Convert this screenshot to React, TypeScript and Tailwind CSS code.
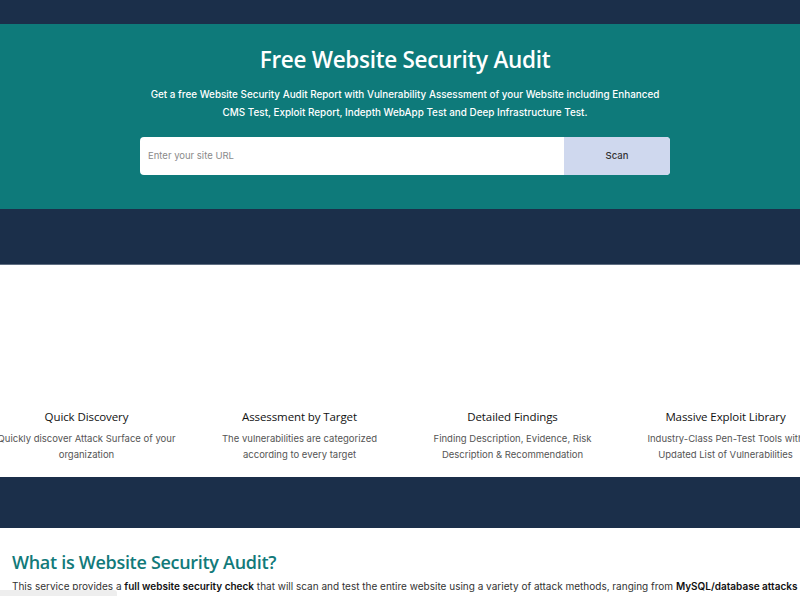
const features = [
  {
    title: 'Quick Discovery',
    text: ['Quickly discover Attack Surface of your', 'organization'],
  },
  {
    title: 'Assessment by Target',
    text: ['The vulnerabilities are categorized', 'according to every target'],
  },
  {
    title: 'Detailed Findings',
    text: ['Finding Description, Evidence, Risk', 'Description & Recommendation'],
  },
  {
    title: 'Massive Exploit Library',
    text: ['Industry-Class Pen-Test Tools with', 'Updated List of Vulnerabilities'],
  },
]

export default function App() {
  return (
    <div className="relative h-[596px] w-[800px] overflow-hidden bg-white font-['Inter',sans-serif]">
      {/* top nav strip */}
      <div className="h-[24px] bg-[#1b2f4a]" />

      {/* hero */}
      <section className="flex h-[185px] flex-col items-center bg-[#0e7a7a] pt-[20px] pl-[10px] text-white">
        <h1 className="font-['Open_Sans',sans-serif] text-[22.5px] leading-[32px] font-semibold tracking-[-0.3px]">
          Free Website Security Audit
        </h1>
        <p className="mt-[9px] text-center text-[9.9px] leading-[18px] font-medium">
          Get a free Website Security Audit Report with Vulnerability Assessment of your Website including Enhanced
          <br />
          CMS Test, Exploit Report, Indepth WebApp Test and Deep Infrastructure Test.
        </p>
        <div className="mt-[16px] flex h-[38px] w-[530px] overflow-hidden rounded-[4px] bg-white">
          <input
            className="flex-1 px-[8px] text-[9.5px] text-gray-700 outline-none placeholder:text-[#8a8a8a]"
            placeholder="Enter your site URL"
          />
          <button className="w-[106px] bg-[#cfd8ee] text-[9.5px] font-medium text-[#333]">Scan</button>
        </div>
      </section>

      <div className="h-[56px] border-b border-[#5f6e82] bg-[#1b2f4a]" />

      {/* features */}
      <section className="h-[212px] overflow-hidden pt-[143px]">
        <div className="ml-[-20px] flex w-[852px]">
          {features.map((f) => (
            <div key={f.title} className="flex w-[213px] flex-col items-center text-center">
              <h3 className="font-['Open_Sans',sans-serif] text-[11.5px] leading-[18px] font-medium tracking-[-0.1px] text-[#111]">
                {f.title}
              </h3>
              <p className="mt-[5px] text-[9.5px] leading-[16px] whitespace-nowrap text-[#555]">
                {f.text[0]}
                <br />
                {f.text[1]}
              </p>
            </div>
          ))}
        </div>
      </section>

      <div className="h-[51px] bg-[#1b2f4a]" />

      {/* what is */}
      <section className="px-[12px] pt-[22px]">
        <h2 className="font-['Open_Sans',sans-serif] text-[18px] leading-[24px] font-semibold tracking-[-0.3px] text-[#127a7a]">
          What is Website Security Audit?
        </h2>
        <p className="mt-[4px] text-[10px] leading-[16px] whitespace-nowrap text-[#333]">
          This service provides a <b className="font-semibold text-[#111]">full website security check</b> that will
          scan and test the entire website using a variety of attack methods, ranging from{' '}
          <b className="font-semibold text-[#111]">MySQL/database attacks</b>
        </p>
      </section>

      {/* floating widget peek */}
      <div className="absolute bottom-0 left-0 h-[6px] w-[117px] rounded-tr-[3px] bg-[#eeeeee]" />
    </div>
  )
}
